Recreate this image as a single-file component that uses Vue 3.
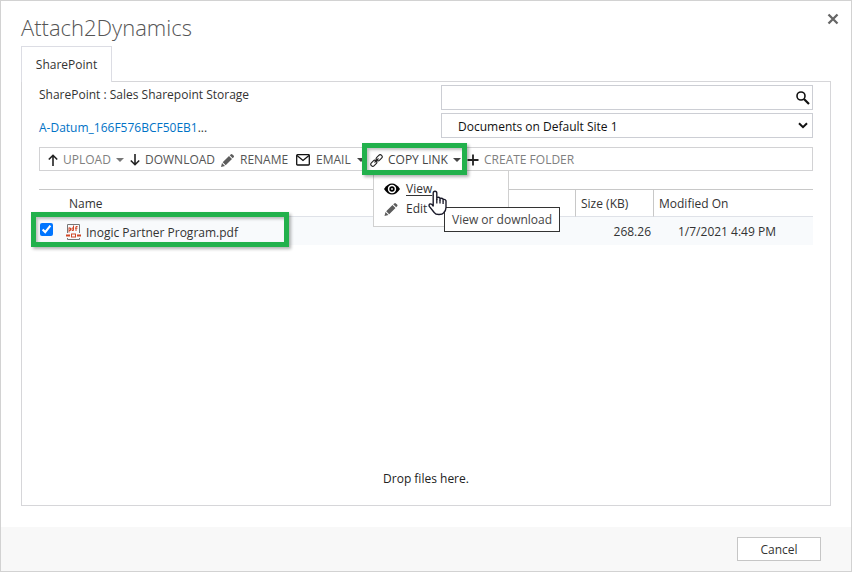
<script setup>
import { ref } from 'vue'

const files = ref([
  { name: 'Inogic Partner Program.pdf', size: '268.26', modified: '1/7/2021 4:49 PM', selected: true }
])
const query = ref('')
const site = ref('Documents on Default Site 1')
</script>

<template>
  <main class="dialog">
    <header class="head">
      <h1>Attach2Dynamics</h1>
      <button class="close" type="button" aria-label="Close">
        <svg width="12" height="12" viewBox="0 0 12 12"><path d="M1.500 1.500l9 9M10.500 1.500l-9 9" stroke="#666" stroke-width="2.300" fill="none" /></svg>
      </button>
    </header>

    <nav class="tabs">
      <button class="tab" type="button">SharePoint</button>
    </nav>

    <section class="panel">
      <div class="top">
        <div class="crumbs">
          <p>SharePoint : Sales Sharepoint Storage</p>
          <p><a href="#">A-Datum_166F576BCF50EB1</a>...</p>
        </div>
        <div class="filters">
          <div class="search">
            <input v-model="query" type="text" aria-label="Search files" />
            <button type="button" aria-label="Search">
              <svg width="14" height="14" viewBox="0 0 14 14" fill="none" stroke="#111"><circle cx="5" cy="5" r="4" stroke-width="1.600" /><path d="M8 8l5 5" stroke-width="2.200" /></svg>
            </button>
          </div>
          <div class="select">
            <select v-model="site" aria-label="Document location">
              <option>Documents on Default Site 1</option>
            </select>
            <svg width="10" height="7" viewBox="0 0 10 7"><path d="M1 1.200l4 4 4-4" stroke="#111" stroke-width="2" fill="none" /></svg>
          </div>
        </div>
      </div>

      <div class="toolbar">
        <button class="tool muted" type="button">
          <svg width="10" height="12" viewBox="0 0 10 12"><path d="M5 12V1.500M.8 5.500L5 1.300l4.200 4.200" stroke="#222" stroke-width="1.600" fill="none" /></svg>
          <span>UPLOAD</span><i class="caret"></i>
        </button>
        <button class="tool" type="button">
          <svg width="10" height="12" viewBox="0 0 10 12"><path d="M5 0v10.500M.8 6.500L5 10.700l4.200-4.200" stroke="#222" stroke-width="1.600" fill="none" /></svg>
          <span>DOWNLOAD</span>
        </button>
        <button class="tool wide-icon" type="button">
          <svg width="13" height="13" viewBox="0 0 13 13" fill="#5c5c5c"><path d="M0 13l1-4 3 3zM1.700 8.200L8 2l3 3-6.300 6.200zM8.700 1.300L9.700.4q.9-.7 1.700 0l1.200 1.200q.8.900 0 1.700l-.9 1z" /></svg>
          <span>RENAME</span>
        </button>
        <button class="tool wide-icon" type="button">
          <svg width="14" height="12" viewBox="0 0 14 12" fill="none" stroke="#111" stroke-width="1.300"><rect x=".7" y=".7" width="12.600" height="10.300" rx=".8" /><path d="M1 1.500l6 5 6-5" /></svg>
          <span>EMAIL</span><i class="caret dark"></i>
        </button>
        <div class="drop">
          <button class="tool dark-text" type="button" aria-expanded="true">
            <svg width="13" height="13" viewBox="0 0 13 13" fill="none" stroke="#222" stroke-width="1.100"><rect x="-3.400" y="-2" width="6.800" height="4" rx="2" transform="translate(9.200 3.800) rotate(-45)" /><rect x="-3.400" y="-2" width="6.800" height="4" rx="2" transform="translate(3.800 9.200) rotate(-45)" /><path d="M4.500 8.500l4-4" /></svg>
            <span>COPY LINK</span><i class="caret dark"></i>
          </button>
          <div class="menu">
            <a class="active" href="#">
              <svg width="16" height="12" viewBox="0 0 16 12"><path d="M0 6Q3.500 .5 8 .5T16 6q-3.500 5.500-8 5.500T0 6z" fill="#000" /><circle cx="8" cy="6" r="4.200" fill="#fff" /><circle cx="8" cy="6" r="2.700" fill="#000" /><circle cx="8" cy="6" r=".9" fill="#fff" /></svg>
              <span>View</span>
            </a>
            <a href="#">
              <svg width="14" height="13" viewBox="0 0 13 13" fill="#5c5c5c"><path d="M0 13l1-4 3 3zM1.700 8.200L8 2l3 3-6.300 6.200zM8.700 1.300L9.700.4q.9-.7 1.700 0l1.200 1.200q.8.900 0 1.700l-.9 1z" /></svg>
              <span>Edit</span>
            </a>
            <div class="tooltip" role="tooltip">View or download</div>
            <svg class="pointer" width="20" height="26" viewBox="0 0 20 26"><path d="M5.200 15V3.200Q5.200 1.200 7 1.200T8.800 3.200V9.500V7.800q1.600-1.300 3.200.2v2-1.400q1.700-1 3.100.5v1.600-1.200q2.200-.6 2.900 1.200v6.800q0 3-2.300 5.300-1.200 1.700-4.700 1.700-3.500 0-5-2.200L1.300 16.400Q.6 14.600 2 14q1.500-.5 3.200 2z" fill="#fff" stroke="#1b1b2b" stroke-width="1.400" stroke-linejoin="round" /><path d="M8.800 9v4.500M12 10v3.500M15.100 11v3" stroke="#1b1b2b" stroke-width="1.300" fill="none" /></svg>
          </div>
        </div>
        <button class="tool muted" type="button">
          <svg width="12" height="12" viewBox="0 0 12 12"><path d="M6 .5v11M.5 6h11" stroke="#222" stroke-width="1.800" /></svg>
          <span>CREATE FOLDER</span>
        </button>
      </div>

      <table>
        <colgroup><col /><col class="c-size" /><col class="c-date" /></colgroup>
        <thead>
          <tr><th class="th-name">Name</th><th>Size (KB)</th><th>Modified On</th></tr>
        </thead>
        <tbody>
          <tr v-for="(f, i) in files" :key="f.name">
            <td class="name">
              <div class="file">
                <input :id="'file' + i" v-model="f.selected" type="checkbox" />
                <svg width="15" height="16" viewBox="0 0 15 16" fill="none"><path d="M1.500 9V.5h12V9M1.500 14v1.500h12V14" stroke="#777" /><path d="M3 8.500V3.500M3 4h1.500v2.500H3M7.500 1.500v5H6V4h1.500M10 7V2.500h1.600M9 4.200h2.500" stroke="#d24726" /><path d="M0 11.500h4M11 11.500h4" stroke="#d24726" stroke-width="2" /><rect x="5.500" y="10" width="4" height="3" stroke="#d24726" /></svg>
                <label :for="'file' + i">{{ f.name }}</label>
              </div>
              <div class="mark"></div>
            </td>
            <td class="size">{{ f.size }}</td>
            <td class="date">{{ f.modified }}</td>
          </tr>
        </tbody>
      </table>
      <p class="hint">Drop files here.</p>
    </section>

    <footer class="foot">
      <button type="button">Cancel</button>
    </footer>
  </main>
</template>

<style>
body { margin: 0; background: #fff; }
</style>

<style scoped>
*, *::before, *::after { box-sizing: border-box; }
.dialog {
  min-height: 100vh;
  display: flex;
  flex-direction: column;
  border: 1px solid #d2d2d2;
  background: #fff;
  color: #333;
  font: 12px/16px "Segoe UI", "Open Sans", "Noto Sans", sans-serif;
}
button, input, select { font: inherit; color: inherit; margin: 0; }
button { padding: 0; border: 0; background: none; }
svg { display: block; flex: none; }
p { margin: 0; }
.head { display: flex; justify-content: space-between; align-items: flex-start; height: 45px; padding: 10px 12px 0 20px; }
h1 { margin: 0; font-size: 22px; line-height: 32px; font-weight: 300; color: #555; }
.close { margin-top: 2px; }
.tabs { padding: 0 20px; display: flex; }
.tab {
  position: relative;
  z-index: 1;
  height: 36px;
  width: 91px;
  margin-bottom: -1px;
  border: 1px solid #dcdde4;
  border-bottom: 0;
  background: #fff;
}
.panel { flex: 1; margin: 0 20px; padding: 3px 17px 0; border: 1px solid #d6d6d9; display: flex; flex-direction: column; }
.top { display: grid; grid-template-columns: 402fr 372fr; }
.crumbs { display: flex; flex-direction: column; gap: 17px; padding-top: 2px; }
a { color: #0072c6; text-decoration: none; }
.filters { display: flex; flex-direction: column; gap: 3px; }
.search, .select { display: flex; align-items: center; height: 25px; border: 1px solid #ccced4; }
.search input { flex: 1; min-width: 0; height: 23px; border: 0; outline: 0; padding: 0 8px; background: none; }
.search button { margin-right: 2px; }
.select { position: relative; }
.select select { flex: 1; height: 23px; border: 0; padding: 2px 24px 0 16px; appearance: none; background: none; color: #111; }
.select svg { position: absolute; right: 4px; top: 8px; pointer-events: none; }
.toolbar {
  display: grid;
  grid-template-columns: 82px 91px 75px 74px 97px auto;
  justify-content: start;
  align-items: center;
  height: 24px;
  margin-top: 9px;
  padding-left: 8px;
  border: 1px solid #d2d2d4;
}
.tool { display: flex; align-items: center; gap: 5px; height: 22px; padding-top: 2px; white-space: nowrap; color: #555; }
.wide-icon { gap: 6px; }
.muted { color: #808080; }
.dark-text { color: #444; }
.caret { border: 4px solid transparent; border-top-color: #777; border-bottom: 0; }
.caret.dark { border-top-color: #444; }
.drop { position: relative; }
.drop::after {
  content: "";
  position: absolute;
  left: -8px;
  top: -5px;
  width: 105px;
  height: 32px;
  border: 5px solid #22b14c;
  box-shadow: 2px 2px 3px rgba(0, 0, 0, .3), inset 2px 2px 3px rgba(0, 0, 0, .25);
  pointer-events: none;
  z-index: 3;
}
.menu {
  position: absolute;
  z-index: 2;
  left: 3px;
  top: 22px;
  width: 136px;
  height: 57px;
  padding: 10px 10px 0;
  display: flex;
  flex-direction: column;
  gap: 4px;
  border: 1px solid #d0d0d0;
  background: #fff;
}
.menu a { display: grid; grid-template-columns: 16px auto; justify-content: start; align-items: center; gap: 6px; color: #333; }
.menu .active span { text-decoration: underline; text-underline-offset: 2px; }
.tooltip {
  position: absolute;
  left: 70px;
  top: 36px;
  height: 25px;
  padding: 4px 7px;
  border: 1px solid #333;
  background: #fff;
  color: #444;
  white-space: nowrap;
}
.pointer { position: absolute; left: 54px; top: 19px; }
table { width: 100%; margin-top: 18px; table-layout: fixed; border-collapse: separate; border-spacing: 0; border-top: 1px solid #c8c8c8; }
.c-size { width: 78px; }
.c-date { width: 160px; }
th { height: 27px; padding: 2px 5px 0; text-align: left; font-weight: 400; border-left: 1px solid #c8c8c8; border-bottom: 1px solid #dfe2e8; }
.th-name { padding-left: 30px; border-left: 0; }
td { height: 28px; padding: 2px 0 0; background: #f8fafc; }
.name { position: relative; }
.file { display: flex; align-items: center; }
.file input { width: 13px; height: 13px; margin: 0 13px 5px 1px; }
.file label { margin-left: 5px; padding-top: 2px; }
.mark {
  position: absolute;
  left: -8px;
  top: -5px;
  width: 258px;
  height: 35px;
  border: 5px solid #22b14c;
  box-shadow: 2px 2px 3px rgba(0, 0, 0, .3), inset 2px 2px 3px rgba(0, 0, 0, .25);
  pointer-events: none;
}
.size { text-align: right; padding-right: 2px; }
.date { padding-left: 25px; }
.hint { margin-top: auto; padding-bottom: 18px; text-align: center; color: #222; }
.foot { display: flex; justify-content: flex-end; height: 44px; margin-top: 21px; padding: 10px 30px 0; background: #f8f8f8; }
.foot button { width: 84px; height: 24px; padding-top: 2px; border: 1px solid #c6c6c6; background: #fff; }
</style>
